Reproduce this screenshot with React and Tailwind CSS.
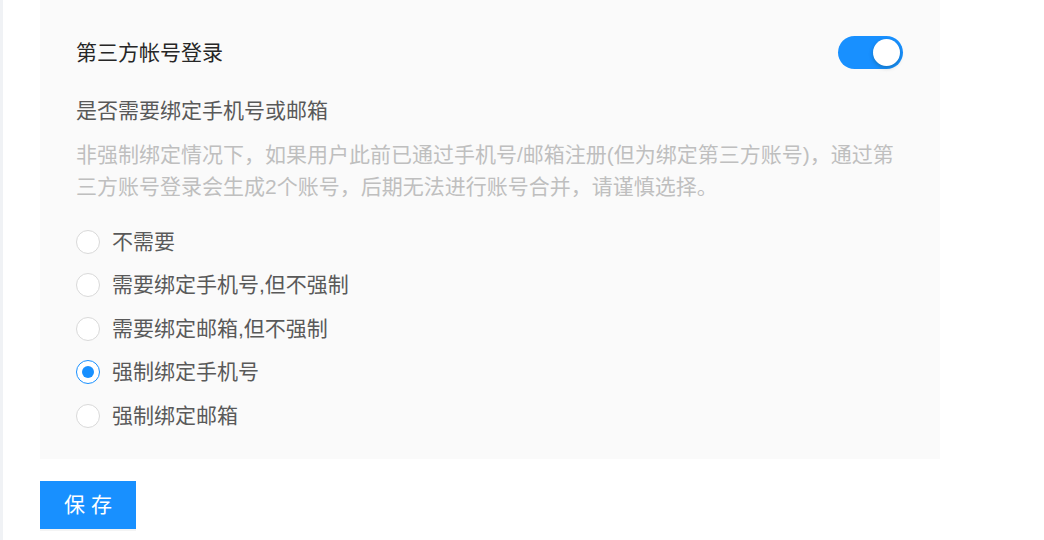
const options = [
  { label: "不需要", checked: false },
  { label: "需要绑定手机号,但不强制", checked: false },
  { label: "需要绑定邮箱,但不强制", checked: false },
  { label: "强制绑定手机号", checked: true },
  { label: "强制绑定邮箱", checked: false },
];

const Radio = ({ label, checked }) => (
  <label className="flex items-center h-[43.5px] cursor-pointer">
    <span
      className={
        checked
          ? "w-6 h-6 rounded-full border-[1.5px] border-[#1890ff] bg-white flex items-center justify-center"
          : "w-6 h-6 rounded-full border-[1.5px] border-[#d9d9d9] bg-white"
      }
    >
      {checked && <span className="w-3 h-3 rounded-full bg-[#1890ff]" />}
    </span>
    <span className="ml-3 text-[21px] leading-[32px] text-[#595959]">{label}</span>
  </label>
);

export default function App() {
  return (
    <div
      className="flex w-[1044px] h-[540px] bg-white overflow-hidden"
      style={{ fontFamily: '"Liberation Sans", "Noto Sans CJK SC", sans-serif' }}
    >
      <div className="w-[3px] bg-[#f0f2f5] shrink-0" />
      <div className="pl-[37px]">
        <div className="w-[900px] bg-[#fafafa] pt-[36px] pl-[36px] pr-[37px] pb-[21px]">
          <div className="flex items-center justify-between h-[33px]">
            <span className="text-[21px] leading-[32px] text-[#262626]">第三方帐号登录</span>
            <button className="w-[65px] h-[33px] rounded-full bg-[#1890ff] flex items-center justify-end pr-[3px]">
              <span className="w-[27px] h-[27px] rounded-full bg-white shadow-[0_2px_4px_rgba(0,35,11,0.25)]" />
            </button>
          </div>

          <p className="mt-[26px] text-[21px] leading-[32px] text-[#595959]">是否需要绑定手机号或邮箱</p>
          <p className="mt-[12px] text-[21px] leading-[32px] text-[#bfbfbf]">
            非强制绑定情况下，如果用户此前已通过手机号/邮箱注册(但为绑定第三方账号)，通过第三方账号登录会生成2个账号，后期无法进行账号合并，请谨慎选择。
          </p>

          <div className="mt-[17px] flex flex-col">
            {options.map((o) => (
              <Radio key={o.label} label={o.label} checked={o.checked} />
            ))}
          </div>
        </div>

        <button className="mt-[22px] w-[96px] h-[48px] bg-[#1890ff] text-white text-[21px] shadow-[0_2px_0_rgba(0,0,0,0.045)]">
          保 存
        </button>
      </div>
    </div>
  );
}
